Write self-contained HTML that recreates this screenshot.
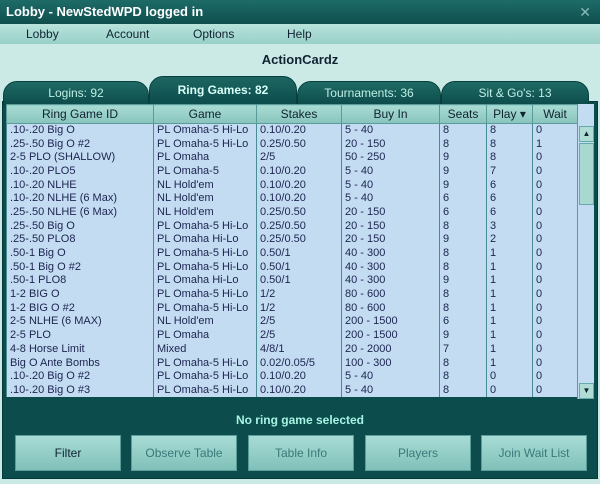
<html><head><style>
body{margin:0;width:600px;height:484px;background:#cbe9e5;font-family:"Liberation Sans",sans-serif;position:relative;overflow:hidden}
.tb{position:absolute;left:0;top:0;width:600px;height:24px;background:linear-gradient(#1d6b68,#0f4f4d);color:#fff;font-weight:bold;font-size:13px;line-height:24px}
.mb{position:absolute;top:24px;left:0;width:600px;height:20px;background:linear-gradient(#b8e4dc,#98d0c8);font-size:12px;color:#123}
.mb span{position:absolute;top:3px}
.tab{position:absolute;top:81px;height:22px;background:linear-gradient(#1f6a66,#0d4d4b);color:#bfeee6;font-size:12px;text-align:center;line-height:22px;border-radius:14px 14px 0 0;border:1px solid #07403e}
.panel{position:absolute;left:2px;top:101px;width:594px;height:376px;background:#0c4c4c;border:1px solid #06383a}
table{position:absolute;left:6px;top:104px;width:571px;table-layout:fixed;border-collapse:collapse;font-size:11px;color:#1c2450;background:#c4dcf2}
td{padding:0 0 0 3px;height:13.7px;line-height:13px;border-left:1px solid #4a8c94;border-right:1px solid #4a8c94;white-space:nowrap;overflow:hidden}
th{height:19px;background:linear-gradient(#a8dcd4,#88c4bc);font-weight:normal;font-size:12px;color:#123;border:1px solid #5a9c9c;padding:0;overflow:hidden;white-space:nowrap}
.sb{position:absolute;left:577px;top:104px;width:16px;height:295px;background:#c4dcf2;border-left:1px solid #5a9c9c}
.btn{position:absolute;top:435px;height:34px;width:104px;background:linear-gradient(#a8dcd6,#80c0b8);color:#3a7a7a;font-size:12px;text-align:center;line-height:34px;border:1px solid #5a9c98}
</style></head><body>
<div class="tb"><span style="margin-left:6px">Lobby - NewStedWPD logged in</span><span style="position:absolute;right:9px;font-weight:normal;color:#8bb;font-size:14px">✕</span></div>
<div class="mb"><span style="left:26px">Lobby</span><span style="left:106px">Account</span><span style="left:193px">Options</span><span style="left:287px">Help</span></div>
<div style="position:absolute;top:52px;width:600px;text-align:center;font-weight:bold;font-size:13px;color:#123">ActionCardz</div>
<div class="panel"></div>
<div class="tab" style="left:3px;width:144px">Logins: 92</div>
<div class="tab" style="left:149px;width:146px;top:76px;height:27px;font-weight:bold;line-height:27px;background:linear-gradient(#1d6662,#0c4c4c);color:#d8fff8">Ring Games: 82</div>
<div class="tab" style="left:297px;width:142px">Tournaments: 36</div>
<div class="tab" style="left:441px;width:146px">Sit &amp; Go's: 13</div>
<table>
<colgroup><col style="width:147px"><col style="width:103px"><col style="width:85px"><col style="width:98px"><col style="width:47px"><col style="width:46px"><col style="width:45px"></colgroup>
<tr><th>Ring Game ID</th><th>Game</th><th>Stakes</th><th>Buy In</th><th>Seats</th><th>Play ▾</th><th>Wait</th></tr>
<tr><td>.10-.20 Big O</td><td>PL Omaha-5 Hi-Lo</td><td>0.10/0.20</td><td>5 - 40</td><td>8</td><td>8</td><td>0</td></tr>
<tr><td>.25-.50 Big O #2</td><td>PL Omaha-5 Hi-Lo</td><td>0.25/0.50</td><td>20 - 150</td><td>8</td><td>8</td><td>1</td></tr>
<tr><td>2-5 PLO (SHALLOW)</td><td>PL Omaha</td><td>2/5</td><td>50 - 250</td><td>9</td><td>8</td><td>0</td></tr>
<tr><td>.10-.20 PLO5</td><td>PL Omaha-5</td><td>0.10/0.20</td><td>5 - 40</td><td>9</td><td>7</td><td>0</td></tr>
<tr><td>.10-.20 NLHE</td><td>NL Hold'em</td><td>0.10/0.20</td><td>5 - 40</td><td>9</td><td>6</td><td>0</td></tr>
<tr><td>.10-.20 NLHE (6 Max)</td><td>NL Hold'em</td><td>0.10/0.20</td><td>5 - 40</td><td>6</td><td>6</td><td>0</td></tr>
<tr><td>.25-.50 NLHE (6 Max)</td><td>NL Hold'em</td><td>0.25/0.50</td><td>20 - 150</td><td>6</td><td>6</td><td>0</td></tr>
<tr><td>.25-.50 Big O</td><td>PL Omaha-5 Hi-Lo</td><td>0.25/0.50</td><td>20 - 150</td><td>8</td><td>3</td><td>0</td></tr>
<tr><td>.25-.50 PLO8</td><td>PL Omaha Hi-Lo</td><td>0.25/0.50</td><td>20 - 150</td><td>9</td><td>2</td><td>0</td></tr>
<tr><td>.50-1 Big O</td><td>PL Omaha-5 Hi-Lo</td><td>0.50/1</td><td>40 - 300</td><td>8</td><td>1</td><td>0</td></tr>
<tr><td>.50-1 Big O #2</td><td>PL Omaha-5 Hi-Lo</td><td>0.50/1</td><td>40 - 300</td><td>8</td><td>1</td><td>0</td></tr>
<tr><td>.50-1 PLO8</td><td>PL Omaha Hi-Lo</td><td>0.50/1</td><td>40 - 300</td><td>9</td><td>1</td><td>0</td></tr>
<tr><td>1-2 BIG O</td><td>PL Omaha-5 Hi-Lo</td><td>1/2</td><td>80 - 600</td><td>8</td><td>1</td><td>0</td></tr>
<tr><td>1-2 BIG O #2</td><td>PL Omaha-5 Hi-Lo</td><td>1/2</td><td>80 - 600</td><td>8</td><td>1</td><td>0</td></tr>
<tr><td>2-5 NLHE (6 MAX)</td><td>NL Hold'em</td><td>2/5</td><td>200 - 1500</td><td>6</td><td>1</td><td>0</td></tr>
<tr><td>2-5 PLO</td><td>PL Omaha</td><td>2/5</td><td>200 - 1500</td><td>9</td><td>1</td><td>0</td></tr>
<tr><td>4-8 Horse Limit</td><td>Mixed</td><td>4/8/1</td><td>20 - 2000</td><td>7</td><td>1</td><td>0</td></tr>
<tr><td>Big O Ante Bombs</td><td>PL Omaha-5 Hi-Lo</td><td>0.02/0.05/5</td><td>100 - 300</td><td>8</td><td>1</td><td>0</td></tr>
<tr><td>.10-.20 Big O #2</td><td>PL Omaha-5 Hi-Lo</td><td>0.10/0.20</td><td>5 - 40</td><td>8</td><td>0</td><td>0</td></tr>
<tr><td>.10-.20 Big O #3</td><td>PL Omaha-5 Hi-Lo</td><td>0.10/0.20</td><td>5 - 40</td><td>8</td><td>0</td><td>0</td></tr>
</table>
<div class="sb">
<div style="position:absolute;left:1px;top:22px;width:13px;height:14px;background:#b0dcd6;border:1px solid #6aa;font-size:8px;text-align:center;line-height:14px;color:#123">▲</div>
<div style="position:absolute;left:1px;top:39px;width:13px;height:60px;background:#a8d8d0;border:1px solid #6aa"></div>
<div style="position:absolute;left:1px;top:279px;width:13px;height:14px;background:#b0dcd6;border:1px solid #6aa;font-size:8px;text-align:center;line-height:14px;color:#123">▼</div>
</div>
<div style="position:absolute;top:413px;width:600px;text-align:center;font-weight:bold;font-size:12px;color:#a8f4e4">No ring game selected</div>
<div class="btn" style="left:15px;color:#123">Filter</div>
<div class="btn" style="left:131px">Observe Table</div>
<div class="btn" style="left:248px">Table Info</div>
<div class="btn" style="left:365px">Players</div>
<div class="btn" style="left:481px">Join Wait List</div>
</body></html>
